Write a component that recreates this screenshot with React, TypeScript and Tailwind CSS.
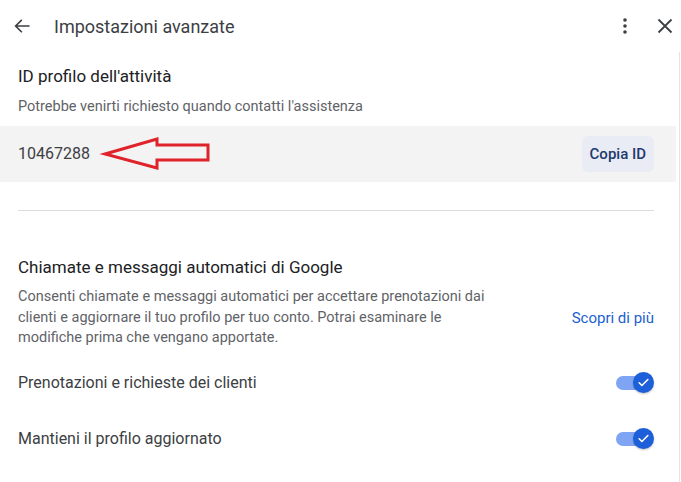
import React from 'react';

function Toggle(): JSX.Element {
  return (
    <div className="relative h-[22px] w-[38px]">
      <div className="absolute left-0 top-[4px] h-[14px] w-[32px] rounded-full bg-[#7ea4f3]" />
      <div className="absolute right-0 top-0 flex h-[21px] w-[21px] items-center justify-center rounded-full bg-[#1c5fd8] shadow-[0_1px_2px_rgba(0,0,0,0.25)]">
        <svg width="13" height="13" viewBox="0 0 24 24" fill="none">
          <path d="M4 12.5l5 5L20 6.5" stroke="white" strokeWidth="3" strokeLinecap="round" strokeLinejoin="round" />
        </svg>
      </div>
    </div>
  );
}

export default function App(): JSX.Element {
  return (
    <div className="h-[482px] w-[681px] overflow-hidden bg-white font-['Roboto',sans-serif]">
      {/* header */}
      <div className="flex h-[52px] items-center">
        <button type="button" className="ml-[10px] flex h-[24px] w-[24px] items-center justify-center text-[#3c4043]">
          <svg width="18" height="18" viewBox="0 0 24 24" fill="none">
            <path d="M21 12H4M11 4.5L3.5 12l7.5 7.5" stroke="currentColor" strokeWidth="2.2" strokeLinecap="square" />
          </svg>
        </button>
        <h1 className="ml-[20px] flex-1 text-[18px] text-[#3c4043]">Impostazioni avanzate</h1>
        <button type="button" className="mr-[16px] flex h-[24px] w-[24px] items-center justify-center text-[#3c4043]">
          <svg width="4" height="16" viewBox="0 0 4 16">
            <circle cx="2" cy="2" r="1.8" fill="currentColor" />
            <circle cx="2" cy="8" r="1.8" fill="currentColor" />
            <circle cx="2" cy="14" r="1.8" fill="currentColor" />
          </svg>
        </button>
        <button type="button" className="mr-[4px] flex h-[24px] w-[24px] items-center justify-center text-[#3c4043]">
          <svg width="16" height="16" viewBox="0 0 16 16">
            <path d="M1.5 1.5l13 13M14.5 1.5l-13 13" stroke="currentColor" strokeWidth="1.8" />
          </svg>
        </button>
      </div>

      {/* body */}
      <div className="h-[430px] w-[680px] border-r border-[#e3e3e3]">
        <div className="px-[18px] pt-[12px]">
          <h2 className="text-[17px] leading-[24px] text-[#202124]">ID profilo dell'attività</h2>
          <p className="mt-[9px] text-[14.5px] leading-[20px] text-[#5f6368]">
            Potrebbe venirti richiesto quando contatti l'assistenza
          </p>
        </div>

        <div className="relative mt-[9px] mr-[3px] flex h-[56px] items-center justify-between bg-[#f3f3f3] pl-[18px] pr-[22px]">
          <span className="text-[16px] text-[#3c4043]">10467288</span>
          <button type="button" className="h-[36px] rounded-[6px] bg-[#e9ecf4] px-[8px] text-[15px] font-medium text-[#22396d]">
            Copia ID
          </button>
          <svg className="absolute left-0 top-0" width="220" height="56" viewBox="0 0 220 56" fill="none">
            <path
              d="M105 28 L157 13 L157 19 L208 19 L208 34 L157 34 L157 42 Z"
              stroke="#e0232a"
              strokeWidth="3"
              strokeLinejoin="miter"
            />
          </svg>
        </div>

        <div className="mx-[18px] mt-[28px] mr-[25px] border-t border-[#dadce0]" />

        <div className="pl-[18px] pr-[25px] pt-[44px]">
          <h2 className="text-[17px] leading-[24px] text-[#202124]">Chiamate e messaggi automatici di Google</h2>
          <div className="mt-[8px] flex items-center justify-between">
            <p className="w-[480px] text-[14.5px] leading-[20.5px] text-[#5f6368]">
              Consenti chiamate e messaggi automatici per accettare prenotazioni dai clienti e aggiornare il tuo profilo per tuo conto. Potrai esaminare le modifiche prima che vengano apportate.
            </p>
            <a className="text-[15px] text-[#1a5fd0]">Scopri di più</a>
          </div>

          <div className="mt-[6px] flex h-[56px] items-center justify-between">
            <span className="text-[16px] text-[#3c4043]">Prenotazioni e richieste dei clienti</span>
            <Toggle />
          </div>
          <div className="flex h-[56px] items-center justify-between">
            <span className="text-[16px] text-[#3c4043]">Mantieni il profilo aggiornato</span>
            <Toggle />
          </div>
        </div>
      </div>
    </div>
  );
}
